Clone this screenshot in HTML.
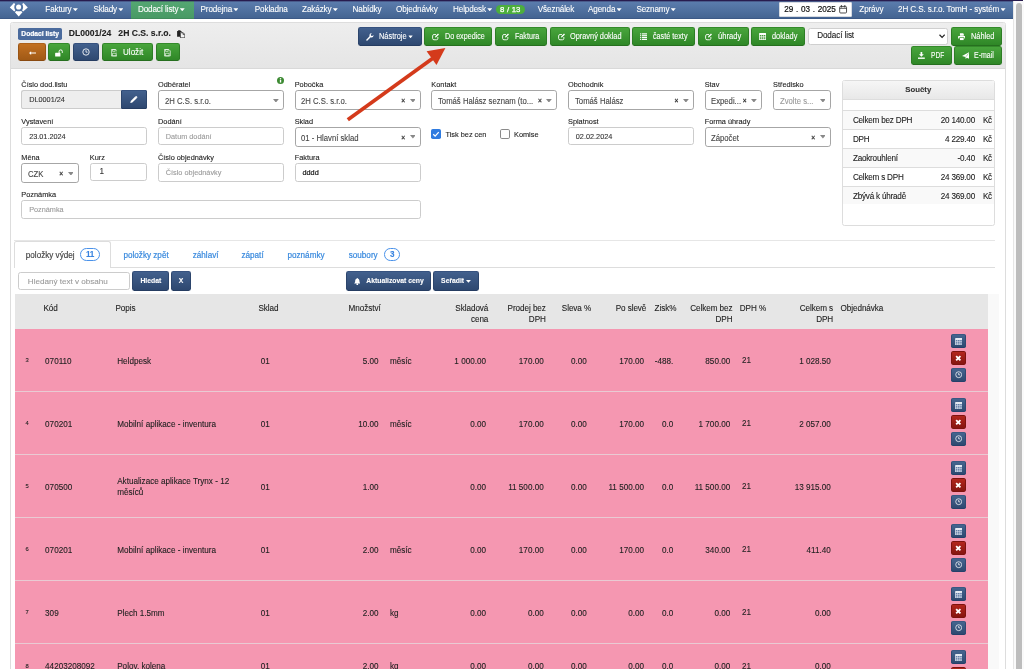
<!DOCTYPE html>
<html lang="cs">
<head>
<meta charset="utf-8">
<title>Dodací list DL0001/24</title>
<style>
*{box-sizing:border-box}
html,body{margin:0;padding:0}
body{width:1024px;height:669px;overflow:hidden;background:#fff;position:relative;font-family:"Liberation Sans",sans-serif;font-size:8px;color:#222;line-height:1.3;will-change:transform;-webkit-text-stroke-width:.1px}
.abs{position:absolute}
svg{display:block}
/* top strip + navbar */
#strip{left:0;top:0;width:1023px;height:1.2px;background:#281c4e}
#nav{left:0;top:1px;width:1013px;height:17.5px;background:linear-gradient(#5c7eae,#446492);border-bottom:1px solid #3c5986;color:#fff;font-size:8.15px;letter-spacing:-.12px}
#nav .it{position:absolute;top:0;height:17px;line-height:17px;white-space:nowrap}
#nav .act{position:absolute;left:130.5px;top:0;width:63px;height:17.5px;background:linear-gradient(#55a773,#489a65);border-bottom:1px solid #418c5c}
.caret{display:inline-block;width:5px;height:2.8px;background:currentColor;clip-path:polygon(0 0,100% 0,50% 100%);vertical-align:middle;margin-left:1.3px;position:relative;top:-.1px}
#nbadge{left:496px;top:3.8px;width:28.5px;height:9.2px;border-radius:4.6px;background:#4cae3c;color:#fff;font-size:7.8px;line-height:9.4px;text-align:center;-webkit-text-stroke-width:.25px;word-spacing:.4px;letter-spacing:0}
#ndate{left:779px;top:1.2px;width:73px;height:14.4px;background:#fff;border:1px solid #d7dbe2;border-radius:1px;color:#111;font-size:8.15px;line-height:14px;padding-left:4.2px;white-space:nowrap;word-spacing:.5px;letter-spacing:0;-webkit-text-stroke-width:.2px}
/* scrollbar */
#sbt{left:1013px;top:1.3px;width:11px;height:668px;background:#fafafa;border-left:1px solid #e6e6e6}
#sbh{left:1016px;top:2.5px;width:6px;height:680px;background:#bdbdbd;border-radius:3px}
/* panel */
#panel{left:10px;top:22.3px;width:995.5px;height:660px;border:1px solid #ddd;border-radius:2.5px;background:#fff}
#phead{left:11px;top:23.3px;width:993.5px;height:45.5px;background:linear-gradient(#eeeeee,#e5e5e5);border-bottom:1px solid #d9d9d9;border-radius:2px 2px 0 0}
.btn{position:absolute;height:18.6px;border-radius:2.4px;color:#fff;font-size:7.3px;line-height:16.6px;white-space:nowrap;border:1px solid}
.g{background:linear-gradient(#48a53c,#2f8727);border-color:#348a2b #2d7d25 #266f1f}
.b{background:linear-gradient(#42608d,#2e4870);border-color:#36527f #2c456c #253c61}
.o{background:linear-gradient(#c27021,#a05916);border-color:#ad611b #9a5414 #8a4a10}
.btn svg{position:absolute}
.btn span{position:absolute;top:1.1px;transform-origin:0 50%}
#pbadge{left:18px;top:27.8px;width:44.2px;height:12.2px;border-radius:1.8px;background:#4b6b9d;color:#fff;font-weight:700;font-size:6.7px;line-height:12.4px;text-align:center;-webkit-text-stroke-width:.22px}
#ptitle{left:68.7px;top:28.3px;font-weight:700;font-size:8.6px;line-height:11px;white-space:nowrap;color:#222;transform:scale(1,1.1);transform-origin:0 100%}
#dsel{left:807.6px;top:27.6px;width:140.4px;height:17.6px;background:#fff;border:1px solid #cfcfcf;border-radius:2.4px;font-size:8.15px;line-height:14.2px;padding-left:8.6px;color:#222;letter-spacing:-.1px}

.lab{position:absolute;font-size:7.35px;line-height:10px;color:#222;white-space:nowrap}
.inp{position:absolute;height:18.7px;border:1px solid #ccc;border-radius:2.6px;background:#fff;font-size:7.3px;line-height:18.4px;padding-left:6.8px;color:#333;white-space:nowrap;overflow:hidden}
.inp.ph{color:#9a9a9a}
.s2{position:absolute;height:20px;border:1px solid #a6a6a6;border-radius:2.8px;background:#fff;font-size:8.15px;line-height:21px;padding-left:5.6px;color:#444;white-space:nowrap;overflow:hidden}
.s2.ph{color:#999}
.s2 span{display:inline-block;transform:scaleX(.95);transform-origin:0 50%}
.s2 svg{left:auto;right:4.3px;top:7.7px}
.s2 u{position:absolute;right:14.6px;top:0;text-decoration:none;font-weight:700;font-size:6.6px;color:#333;line-height:19px}

#sums{left:841.6px;top:80.2px;width:153.3px;height:146px;border:1px solid #ddd;border-radius:2.5px;background:#fff}
#sumh{left:842.6px;top:81.2px;width:151.3px;height:18.6px;background:linear-gradient(#f6f6f6,#e8e8e8);border-bottom:1px solid #ddd;text-align:center;font-weight:700;font-size:7.8px;line-height:17.600px;color:#333}
.sr{position:absolute;left:842.6px;width:151.3px;height:18.85px;border-top:1px solid #ddd;font-size:8.15px;letter-spacing:-.21px;line-height:20.8px;color:#222}
.sr i,.sr em,.sr s{position:absolute;top:0;font-style:normal;text-decoration:none;white-space:nowrap}
.sr i{left:10.300px}.sr em{right:18.900px}.sr s{left:140.300px}

#hr1{left:14.3px;top:240px;width:981px;height:1px;background:#e6e6e6}
#hr2{left:14.3px;top:267.1px;width:981px;height:1px;background:#ddd}
#tab1{left:14.3px;top:241px;width:96.3px;height:27px;border:1px solid #ddd;border-bottom:0;border-radius:2.5px 2.5px 0 0;background:#fff}
.tt{position:absolute;top:249.9px;font-size:8.15px;line-height:11px;white-space:nowrap;color:#3a8ade;-webkit-text-stroke:.2px #3a8ade}
.tbg{position:absolute;height:12.7px;border:1.25px solid #4a92ea;border-radius:6.4px;background:#fff;color:#3a84e0;font-weight:700;font-size:8.15px;line-height:11.2px;text-align:center;letter-spacing:-.3px}
.sb{position:absolute;height:19.6px;border-radius:2.4px;color:#fff;font-size:6.8px;font-weight:700;line-height:18.4px;white-space:nowrap;border-width:1px;border-style:solid;text-align:center}

#tside{left:987.8px;top:294.3px;width:10.9px;height:380px;background:#f9f9f9}
#thead{left:14.5px;top:294.3px;width:973.3px;height:34.7px;background:#e6e6e6}
.th{position:absolute;font-size:8.15px;letter-spacing:-.06px;line-height:10.9px;color:#222;white-space:nowrap;top:303.9px}
.th.r{text-align:right}
.row{position:absolute;left:14.5px;width:973.3px;height:62.85px;background:#f597b1;border-top:1px solid #e9cad3;font-size:8.15px;color:#222}
.row span{position:absolute;line-height:10px;white-space:nowrap}
.row span.r{text-align:right}
.ab{position:absolute;left:936px;width:15.6px;height:13.6px;border-radius:1.800px;border:1px solid}
.ab.b{background:linear-gradient(#45658f,#2e4970);border-color:#3a5882 #2f4a72 #26406a}
.ab.rd{background:linear-gradient(#b3261c,#861510);border-color:#7d130e}
</style>
</head>
<body>
<div id="strip" class="abs"></div>
<div class="abs" style="left:0;top:1px;width:1013px;height:1px;background:rgba(40,28,78,.35);z-index:2"></div>
<div id="nav" class="abs">
  <div class="act"></div>
  <svg class="abs" style="left:0;top:-1px" width="40" height="19" viewBox="0 0 40 19"><g fill="#fff"><circle cx="18.600" cy="7" r="2.550"/><path d="M9.800 7.500L13.900 3.100L15.200 4.100Q13.300 7.200 15.300 10.400L14.300 11.500Z"/><path d="M27.800 7.500L23.500 3.100L22.200 4.100Q24.100 7.200 22.100 10.400L23.100 11.500Z"/><path d="M14.900 12.200L16.200 10.900Q18.650 11.800 21.100 10.900L22.500 12.200L18.700 16.400Z"/></g></svg>
  <div class="it" style="left:45.3px">Faktury<i class="caret"></i></div>
  <div class="it" style="left:93.4px">Sklady<i class="caret"></i></div>
  <div class="it" style="left:137.9px">Dodací listy<i class="caret"></i></div>
  <div class="it" style="left:200.5px">Prodejna<i class="caret"></i></div>
  <div class="it" style="left:254.8px">Pokladna</div>
  <div class="it" style="left:302.1px">Zakázky<i class="caret"></i></div>
  <div class="it" style="left:352.5px">Nabídky</div>
  <div class="it" style="left:396px">Objednávky</div>
  <div class="it" style="left:453px">Helpdesk<i class="caret"></i></div>
  <div id="nbadge" class="abs">8 / 13</div>
  <div class="it" style="left:537.8px">Všeználek</div>
  <div class="it" style="left:588px">Agenda<i class="caret"></i></div>
  <div class="it" style="left:636.4px">Seznamy<i class="caret"></i></div>
  <div id="ndate" class="abs">29 . 03 . 2025</div>
  <svg class="abs" style="left:839.4px;top:4px" width="8.2" height="8.6" viewBox="0 0 16 17"><rect x="1.2" y="2.800" width="13.600" height="13" rx="2" fill="none" stroke="#333" stroke-width="1.700"/><path d="M1.2 6.500h13.600" stroke="#333" stroke-width="1.700"/><path d="M4.600 0.600v3.600M11.400 0.600v3.600" stroke="#333" stroke-width="1.700" stroke-linecap="round"/></svg>
  <div class="it" style="left:859.3px">Zprávy</div>
  <div class="it" style="left:898px">2H C.S. s.r.o. TomH - systém<i class="caret"></i></div>
</div>
<div id="sbt" class="abs"></div>
<div id="sbh" class="abs"></div>
<div id="panel" class="abs"></div>
<div id="phead" class="abs"></div>
<div id="pbadge" class="abs">Dodací listy</div>
<div id="ptitle" class="abs">DL0001/24&nbsp;&nbsp;&nbsp;2H C.S. s.r.o.</div>
<div class="btn o" style="left:18px;top:43.0px;width:27.7px;height:18.4px;font-size:8.15px;line-height:16.4px"><svg class="abs" style="left:9.7px;top:7.2px" width="7.4" height="4.2" viewBox="0 0 28 16"><path d="M0 8l8-7v5h20v4H8v5z" fill="#fff"/></svg></div>
<div class="btn g" style="left:48px;top:43.0px;width:22.3px;height:18.4px;font-size:8.15px;line-height:16.4px"><svg class="abs" style="left:6.4px;top:4.7px" width="8.2" height="8.2" viewBox="0 0 28 28"><path d="M1 13h15a1.500 1.500 0 0 1 1.500 1.500v10a1.500 1.500 0 0 1-1.500 1.500H1a1.500 1.500 0 0 1-1.500-1.500v-10A1.500 1.500 0 0 1 1 13z" fill="#fff" transform="translate(1,0)"/><path d="M14 13V8.500a5.500 5.500 0 0 1 11 0V12" fill="none" stroke="#fff" stroke-width="3.400" stroke-linecap="round"/></svg></div>
<div class="btn b" style="left:73px;top:43.0px;width:25.8px;height:18.4px;font-size:8.15px;line-height:16.4px"><svg class="abs" style="left:8.2px;top:3.9px" width="8" height="8" viewBox="0 0 24 24"><circle cx="12" cy="12" r="9.600" fill="none" stroke="#fff" stroke-width="2.6"/><path d="M12 6.500V12.500H16.500" fill="none" stroke="#fff" stroke-width="2.400"/></svg></div>
<div class="btn g" style="left:102px;top:43.0px;width:51.1px;height:18.4px;font-size:8.15px;line-height:16.4px"><svg class="abs" style="left:7.8px;top:5.2px" width="6.6" height="7.4" viewBox="0 0 22 24"><path d="M1.200 1.200h14.800l4.800 4.800v16.800H1.200z" fill="none" stroke="#fff" stroke-width="2.400" stroke-linejoin="round"/><path d="M5 1.500h9v6H5z" fill="none" stroke="#fff" stroke-width="2"/><path d="M5 14h12v8.500H5z" fill="none" stroke="#fff" stroke-width="2"/></svg><span style="transform:scaleX(0.994);left:20.4px">Uložit</span></div>
<div class="btn g" style="left:155.7px;top:43.0px;width:24.0px;height:18.4px;font-size:8.15px;line-height:16.4px"><svg class="abs" style="left:7.6px;top:5.2px" width="6.6" height="7.4" viewBox="0 0 22 24"><path d="M1.200 1.200h14.800l4.800 4.800v16.800H1.200z" fill="none" stroke="#fff" stroke-width="2.400" stroke-linejoin="round"/><path d="M5 1.500h9v6H5z" fill="none" stroke="#fff" stroke-width="2"/><path d="M5 14h12v8.500H5z" fill="none" stroke="#fff" stroke-width="2"/></svg></div>
<svg class="abs" style="left:176.6px;top:29.6px" width="8.4" height="8.2" viewBox="0 0 24 24"><path d="M0 3h3V0.500h7V3h3v4H8.500v13H0z" fill="#222"/><path d="M9.800 8h8l5 5V23H9.800z" fill="#f4f4f4" stroke="#222" stroke-width="2.200" stroke-linejoin="round"/><path d="M17.300 8.300v5h5" fill="none" stroke="#222" stroke-width="1.800"/></svg>
<div class="btn b" style="left:358.2px;top:27.0px;width:63.7px;height:18.8px;font-size:8.15px;line-height:16.8px"><svg class="abs" style="left:6.8px;top:5.4px" width="7.8" height="7.8" viewBox="0 0 24 24"><path d="M3 21.500L13.500 11" stroke="#fff" stroke-width="4.400" stroke-linecap="round"/><path d="M22.800 6.200a6.200 6.200 0 1 1-5-5l-3.300 3.600 1 3.700 3.700 1z" fill="#fff"/></svg><span style="transform:scaleX(0.913);left:19.7px">Nástroje<i class="caret" style="margin-left:1.8px"></i></span></div>
<div class="btn g" style="left:424.2px;top:27.0px;width:68.0px;height:18.8px;font-size:8.15px;line-height:16.8px"><svg class="abs" style="left:6.4px;top:5.4px" width="7.4" height="7.4" viewBox="0 0 24 24"><path d="M19 13v4.500a4.500 4.500 0 0 1-4.500 4.500H6.500a4.500 4.500 0 0 1-4.500-4.500V9.500a4.500 4.500 0 0 1 4.500-4.500h6.500" fill="none" stroke="#fff" stroke-width="2.900"/><path d="M9.500 15l1-4.200L19.500 1.800l3.200 3.200-9 9z" fill="#fff"/></svg><span style="transform:scaleX(0.881);left:19.7px">Do expedice</span></div>
<div class="btn g" style="left:494.9px;top:27.0px;width:52.6px;height:18.8px;font-size:8.15px;line-height:16.8px"><svg class="abs" style="left:6.4px;top:5.4px" width="7.4" height="7.4" viewBox="0 0 24 24"><path d="M19 13v4.500a4.500 4.500 0 0 1-4.500 4.500H6.500a4.500 4.500 0 0 1-4.500-4.500V9.500a4.500 4.500 0 0 1 4.500-4.500h6.500" fill="none" stroke="#fff" stroke-width="2.900"/><path d="M9.500 15l1-4.200L19.500 1.800l3.200 3.200-9 9z" fill="#fff"/></svg><span style="transform:scaleX(0.88);left:19.3px">Faktura</span></div>
<div class="btn g" style="left:550.2px;top:27.0px;width:79.6px;height:18.8px;font-size:8.15px;line-height:16.8px"><svg class="abs" style="left:6.4px;top:5.4px" width="7.4" height="7.4" viewBox="0 0 24 24"><path d="M19 13v4.500a4.500 4.500 0 0 1-4.500 4.500H6.500a4.500 4.500 0 0 1-4.500-4.500V9.500a4.500 4.500 0 0 1 4.500-4.500h6.500" fill="none" stroke="#fff" stroke-width="2.900"/><path d="M9.500 15l1-4.200L19.500 1.800l3.200 3.200-9 9z" fill="#fff"/></svg><span style="transform:scaleX(0.906);left:19.1px">Opravný doklad</span></div>
<div class="btn g" style="left:632.2px;top:27.0px;width:63.1px;height:18.8px;font-size:8.15px;line-height:16.8px"><svg class="abs" style="left:6.8px;top:5.4px" width="7.2" height="7" viewBox="0 0 24 24"><rect x="0" y="1" width="4" height="4" fill="#fff"/><rect x="6.500" y="1" width="17.500" height="4" fill="#fff"/><rect x="0" y="7.3" width="4" height="4" fill="#fff"/><rect x="6.500" y="7.3" width="17.500" height="4" fill="#fff"/><rect x="0" y="13.6" width="4" height="4" fill="#fff"/><rect x="6.500" y="13.6" width="17.500" height="4" fill="#fff"/><rect x="0" y="19.9" width="4" height="4" fill="#fff"/><rect x="6.500" y="19.9" width="17.500" height="4" fill="#fff"/></svg><span style="transform:scaleX(0.888);left:19.7px">časté texty</span></div>
<div class="btn g" style="left:697.8px;top:27.0px;width:50.8px;height:18.8px;font-size:8.15px;line-height:16.8px"><svg class="abs" style="left:6.4px;top:5.4px" width="7.4" height="7.4" viewBox="0 0 24 24"><path d="M19 13v4.500a4.500 4.500 0 0 1-4.500 4.500H6.500a4.500 4.500 0 0 1-4.500-4.500V9.500a4.500 4.500 0 0 1 4.500-4.500h6.500" fill="none" stroke="#fff" stroke-width="2.900"/><path d="M9.500 15l1-4.200L19.500 1.800l3.200 3.200-9 9z" fill="#fff"/></svg><span style="transform:scaleX(0.933);left:18.9px">úhrady</span></div>
<div class="btn g" style="left:751.3px;top:27.0px;width:53.5px;height:18.8px;font-size:8.15px;line-height:16.8px"><svg class="abs" style="left:6.8px;top:5.4px" width="7.2" height="7" viewBox="0 0 24 24"><path d="M0 2a2 2 0 0 1 2-2h20a2 2 0 0 1 2 2v20a2 2 0 0 1-2 2H2a2 2 0 0 1-2-2z" fill="#fff"/><g fill="#3f9433"><rect x="2.500" y="7" width="5.200" height="3.600"/><rect x="9.400" y="7" width="5.200" height="3.600"/><rect x="16.300" y="7" width="5.200" height="3.600"/><rect x="2.500" y="12.400" width="5.200" height="3.600"/><rect x="9.400" y="12.400" width="5.200" height="3.600"/><rect x="16.300" y="12.400" width="5.200" height="3.600"/><rect x="2.500" y="17.800" width="5.200" height="3.600"/><rect x="9.400" y="17.800" width="5.200" height="3.600"/><rect x="16.300" y="17.800" width="5.200" height="3.600"/></g></svg><span style="transform:scaleX(0.904);left:19.3px">doklady</span></div>
<div id="dsel" class="abs">Dodací list<svg class="abs" style="left:130px;top:5.8px" width="6.2" height="4.400" viewBox="0 0 12 8"><path d="M1 1.200l5 5 5-5" fill="none" stroke="#222" stroke-width="2.300"/></svg></div>
<div class="btn g" style="left:950.5px;top:26.8px;width:51.6px;height:18.9px;font-size:8.15px;line-height:16.9px"><svg class="abs" style="left:6.2px;top:5.45px" width="7.6" height="7.4" viewBox="0 0 24 24"><path d="M6 1h10l2.500 2.500V9H6z" fill="#fff"/><path d="M2 9.500h20a2 2 0 0 1 2 2V18h-4v-4H4v4H0v-6.500a2 2 0 0 1 2-2z" fill="#fff"/><path d="M6 16h12v7H6z" fill="#fff"/></svg><span style="transform:scaleX(0.906);left:19.3px">Náhled</span></div>
<div class="btn g" style="left:911.2px;top:46.2px;width:40.6px;height:18.4px;font-size:8.15px;line-height:16.4px"><svg class="abs" style="left:6.0px;top:5.2px" width="6.8" height="7" viewBox="0 0 24 24"><path d="M9 0h6v8h5.500L12 16.500 3.500 8H9z" fill="#fff"/><path d="M0 19h24v5H0z" fill="#fff"/></svg><span style="transform:scaleX(0.81);left:18.9px">PDF</span></div>
<div class="btn g" style="left:954.3px;top:46.2px;width:47.8px;height:18.4px;font-size:8.15px;line-height:16.4px"><svg class="abs" style="left:6.9px;top:5.2px" width="7" height="7" viewBox="0 0 24 24"><path d="M0 13.500L24 1V23L16.500 19.500L12.500 24L12 17.500Z" fill="#fff"/><path d="M14 16L22 5" stroke="#3b9631" stroke-width="1.600"/></svg><span style="transform:scaleX(0.859);left:19.1px">E-mail</span></div>
<div class="lab" style="left:21.33px;top:79.9px">Číslo dod.listu</div>
<div class="inp" style="left:21.33px;top:90.1px;width:100.07px;background:#eee;border-radius:2.6px 0 0 2.6px;border-right:0;">DL0001/24</div>
<div class="btn b" style="left:120.9px;top:90.1px;width:26.1px;height:18.7px;border-radius:0 1.2px 1.2px 0"><svg class="abs" style="left:8.4px;top:4.6px" width="7.4" height="7.4" viewBox="0 0 24 24"><path d="M1 23l1.500-6.500L17 2l5 5L7.500 21.500z" fill="#fff"/><path d="M18.500 0.800a2 2 0 0 1 2.800 0l2 2a2 2 0 0 1 0 2.800L22 7l-5-5z" fill="#fff"/></svg></div>
<div class="lab" style="left:158px;top:79.9px">Odběratel</div>
<svg class="abs" style="left:277px;top:76.8px" width="7" height="7" viewBox="0 0 24 24"><circle cx="12" cy="12" r="12" fill="#3c8a32"/><rect x="9.800" y="10" width="4.600" height="9" fill="#fff"/><circle cx="12" cy="6" r="2.600" fill="#fff"/></svg>
<div class="s2" style="left:158px;top:89.9px;width:126px"><span>2H C.S. s.r.o.</span><svg class="abs" width="5.8" height="3.600" viewBox="0 0 58 36"><path d="M0 0h58L29 36z" fill="#888"/></svg></div>
<div class="lab" style="left:294.67px;top:79.9px">Pobočka</div>
<div class="s2" style="left:294.67px;top:89.9px;width:126.0px"><span>2H C.S. s.r.o.</span><u>×</u><svg class="abs" width="5.8" height="3.600" viewBox="0 0 58 36"><path d="M0 0h58L29 36z" fill="#888"/></svg></div>
<div class="lab" style="left:431.33px;top:79.9px">Kontakt</div>
<div class="s2" style="left:431.33px;top:89.9px;width:126.0px"><span>Tomáš Halász seznam (to...</span><u>×</u><svg class="abs" width="5.8" height="3.600" viewBox="0 0 58 36"><path d="M0 0h58L29 36z" fill="#888"/></svg></div>
<div class="lab" style="left:568px;top:79.9px">Obchodník</div>
<div class="s2" style="left:568px;top:89.9px;width:126px"><span>Tomáš Halász</span><u>×</u><svg class="abs" width="5.8" height="3.600" viewBox="0 0 58 36"><path d="M0 0h58L29 36z" fill="#888"/></svg></div>
<div class="lab" style="left:704.67px;top:79.9px">Stav</div>
<div class="s2" style="left:704.67px;top:89.9px;width:57.66px"><span>Expedi...</span><u>×</u><svg class="abs" width="5.8" height="3.600" viewBox="0 0 58 36"><path d="M0 0h58L29 36z" fill="#888"/></svg></div>
<div class="lab" style="left:773px;top:79.9px">Středisko</div>
<div class="s2 ph" style="left:773px;top:89.9px;width:57.67px"><span>Zvolte s...</span><svg class="abs" width="5.8" height="3.600" viewBox="0 0 58 36"><path d="M0 0h58L29 36z" fill="#888"/></svg></div>
<div class="lab" style="left:21.33px;top:116.5px">Vystavení</div>
<div class="inp" style="left:21.33px;top:126.7px;width:126.0px;">23.01.2024</div>
<div class="lab" style="left:158px;top:116.5px">Dodání</div>
<div class="inp ph" style="left:158px;top:126.7px;width:126px;">Datum dodání</div>
<div class="lab" style="left:294.67px;top:116.5px">Sklad</div>
<div class="s2" style="left:294.67px;top:126.5px;width:126.0px"><span>01 - Hlavní sklad</span><u>×</u><svg class="abs" width="5.8" height="3.600" viewBox="0 0 58 36"><path d="M0 0h58L29 36z" fill="#888"/></svg></div>
<div class="abs" style="left:431.2px;top:129.2px;width:10px;height:10px;border-radius:1.800px;background:#2f7be0"><svg width="10" height="10" viewBox="0 0 20 20"><path d="M4.500 10.500l3.800 3.800 7.200-8" fill="none" stroke="#fff" stroke-width="2.600"/></svg></div>
<div class="lab" style="left:445.5px;top:130.1px">Tisk bez cen</div>
<div class="abs" style="left:499.5px;top:129.2px;width:10px;height:10px;border-radius:1.800px;background:#fff;border:1px solid #8a8a8a"></div>
<div class="lab" style="left:514px;top:130.1px">Komise</div>
<div class="lab" style="left:568px;top:116.5px">Splatnost</div>
<div class="inp" style="left:568px;top:126.7px;width:126px;">02.02.2024</div>
<div class="lab" style="left:704.67px;top:116.5px">Forma úhrady</div>
<div class="s2" style="left:704.67px;top:126.5px;width:126.0px"><span>Zápočet</span><u>×</u><svg class="abs" width="5.8" height="3.600" viewBox="0 0 58 36"><path d="M0 0h58L29 36z" fill="#888"/></svg></div>
<div class="lab" style="left:21.33px;top:153.0px">Měna</div>
<div class="s2" style="left:21.4px;top:163.0px;width:57.4px"><span>CZK</span><u>×</u><svg class="abs" width="5.8" height="3.600" viewBox="0 0 58 36"><path d="M0 0h58L29 36z" fill="#888"/></svg></div>
<div class="lab" style="left:89.8px;top:153.0px">Kurz</div>
<div class="inp" style="left:90px;top:163.2px;width:56.8px;padding-left:8.6px;line-height:15.4px;font-size:8.15px;height:17.8px;">1</div>
<div class="lab" style="left:158px;top:153.0px">Číslo objednávky</div>
<div class="inp ph" style="left:158px;top:163.2px;width:126px;">Číslo objednávky</div>
<div class="lab" style="left:294.67px;top:153.0px">Faktura</div>
<div class="inp" style="left:294.67px;top:163.2px;width:126.0px;color:#111;-webkit-text-stroke-width:.18px;">dddd</div>
<div class="lab" style="left:21.33px;top:190.0px">Poznámka</div>
<div class="inp ph" style="left:21.33px;top:200.2px;width:399.34px;">Poznámka</div>
<div id="sums" class="abs"></div><div id="sumh" class="abs">Součty</div>
<div class="sr" style="top:110.2px;background:#f9f9f9;"><i>Celkem bez DPH</i><em>20 140.00</em><s>Kč</s></div>
<div class="sr" style="top:129.05px;"><i>DPH</i><em>4 229.40</em><s>Kč</s></div>
<div class="sr" style="top:147.9px;background:#f9f9f9;"><i>Zaokrouhlení</i><em>-0.40</em><s>Kč</s></div>
<div class="sr" style="top:166.75px;"><i>Celkem s DPH</i><em>24 369.00</em><s>Kč</s></div>
<div class="sr" style="top:185.6px;background:#f9f9f9;"><i>Zbývá k úhradě</i><em>24 369.00</em><s>Kč</s></div>
<div id="hr1" class="abs"></div><div id="hr2" class="abs"></div><div id="tab1" class="abs"></div>
<div class="tt" style="left:25.8px;color:#444;-webkit-text-stroke:.15px #444">položky výdej</div><div class="tbg" style="left:80.1px;top:248.2px;width:19.8px">11</div>
<div class="tt" style="left:123.5px">položky zpět</div>
<div class="tt" style="left:192.75px">záhlaví</div>
<div class="tt" style="left:241.5px">zápatí</div>
<div class="tt" style="left:287.5px">poznámky</div>
<div class="tt" style="left:348.75px">soubory</div>
<div class="tbg" style="left:384.3px;top:248.2px;width:15.8px">3</div>
<div class="inp ph" style="left:17.6px;top:271.900px;width:112px;height:17.800px;line-height:17.2px;font-size:8.1px;padding-left:9.2px">Hledaný text v obsahu</div>
<div class="sb b" style="left:132.2px;top:271.2px;width:37.3px">Hledat</div>
<div class="sb b" style="left:171.3px;top:271.2px;width:19.7px">X</div>
<div class="sb b" style="left:345.5px;top:271.2px;width:85.5px;text-align:left"><svg class="abs" style="left:7.2px;top:6.2px" width="6.6" height="7.2" viewBox="0 0 22 24"><path d="M11 1.500c4.500 0 7 3.500 7 8 0 5 1.500 7 3.500 9H0.500c2-2 3.500-4 3.500-9 0-4.500 2.500-8 7-8z" fill="#fff"/><circle cx="11" cy="20.500" r="3" fill="#fff"/><circle cx="11" cy="1.800" r="1.800" fill="#fff"/></svg><span style="position:absolute;left:19.800px">Aktualizovat ceny</span></div>
<div class="sb b" style="left:433.3px;top:271.2px;width:45.7px;text-align:left"><span style="position:absolute;left:6.8px">Seřadit<i class="caret" style="margin-left:1.8px"></i></span></div>
<div id="tside" class="abs"></div><div id="thead" class="abs"></div>
<div class="th" style="left:43.5px">Kód</div>
<div class="th" style="left:115.5px">Popis</div>
<div class="th" style="left:258.5px">Sklad</div>
<div class="th" style="left:348.6px">Množství</div>
<div class="th r" style="right:535.7px">Skladová<br>cena</div>
<div class="th r" style="right:478.2px">Prodej bez<br>DPH</div>
<div class="th" style="left:561.8px">Sleva %</div>
<div class="th r" style="right:377.7px">Po slevě</div>
<div class="th" style="left:654.5px">Zisk%</div>
<div class="th r" style="right:291.5px">Celkem bez<br>DPH</div>
<div class="th" style="left:739.8px">DPH %</div>
<div class="th r" style="right:190.9px">Celkem s<br>DPH</div>
<div class="th" style="left:840.5px">Objednávka</div>
<div class="row" style="top:329px;height:62px;border-top:0;"><span style="top:25.9px;left:11.1px;font-size:5.8px;">3</span><span style="top:27.5px;left:30.6px;">070110</span><span style="top:27.5px;left:102.7px;">Heldpesk</span><span style="top:27.5px;left:246.3px;">01</span><span class="r" style="top:27.5px;right:609.3px">5.00</span><span style="top:27.5px;left:375.5px;">měsíc</span><span class="r" style="top:27.5px;right:501.8px">1 000.00</span><span class="r" style="top:27.5px;right:444.1px">170.00</span><span class="r" style="top:27.5px;right:401.1px">0.00</span><span class="r" style="top:27.5px;right:343.8px">170.00</span><span class="r" style="top:27.5px;right:314.6px">-488.</span><span class="r" style="top:27.5px;right:257.6px">850.00</span><span style="top:26.8px;left:727.4px;">21</span><span class="r" style="top:27.5px;right:157.0px">1 028.50</span><div class="ab b" style="top:5.3px"><svg class="abs" style="left:3.4px;top:2.5px" width="7.6" height="7.2" viewBox="0 0 24 23.500"><rect x="0" y="0" width="24" height="23.500" rx="1.500" fill="#e3e8f0"/><rect x="2.2" y="6.6" width="5.400" height="4" fill="#5f7ba6"/><rect x="2.2" y="12" width="5.400" height="4" fill="#5f7ba6"/><rect x="2.2" y="17.4" width="5.400" height="4" fill="#5f7ba6"/><rect x="9.3" y="6.6" width="5.400" height="4" fill="#5f7ba6"/><rect x="9.3" y="12" width="5.400" height="4" fill="#5f7ba6"/><rect x="9.3" y="17.4" width="5.400" height="4" fill="#5f7ba6"/><rect x="16.4" y="6.6" width="5.400" height="4" fill="#5f7ba6"/><rect x="16.4" y="12" width="5.400" height="4" fill="#5f7ba6"/><rect x="16.4" y="17.4" width="5.400" height="4" fill="#5f7ba6"/></svg></div><div class="ab rd" style="top:22.4px"><svg class="abs" style="left:3.7px;top:2.6px" width="6.6" height="6.6" viewBox="0 0 20 20"><path d="M3.500 3.500l13 13M16.500 3.500l-13 13" stroke="#fff" stroke-width="5.6" stroke-linecap="butt"/></svg></div><div class="ab b" style="top:39.2px"><svg class="abs" style="left:3.3px;top:2.1px" width="7.4" height="7.4" viewBox="0 0 24 24"><circle cx="12" cy="12" r="9.600" fill="none" stroke="#fff" stroke-width="2.4"/><path d="M12 6.500V12.500H16.500" fill="none" stroke="#fff" stroke-width="2.400"/></svg></div></div>
<div class="row" style="top:391px;height:63px;"><span style="top:25.9px;left:11.1px;font-size:5.8px;">4</span><span style="top:27.5px;left:30.6px;">070201</span><span style="top:27.5px;left:102.7px;">Mobilní aplikace - inventura</span><span style="top:27.5px;left:246.3px;">01</span><span class="r" style="top:27.5px;right:609.3px">10.00</span><span style="top:27.5px;left:375.5px;">měsíc</span><span class="r" style="top:27.5px;right:501.8px">0.00</span><span class="r" style="top:27.5px;right:444.1px">170.00</span><span class="r" style="top:27.5px;right:401.1px">0.00</span><span class="r" style="top:27.5px;right:343.8px">170.00</span><span class="r" style="top:27.5px;right:314.6px">0.0</span><span class="r" style="top:27.5px;right:257.6px">1 700.00</span><span style="top:26.8px;left:727.4px;">21</span><span class="r" style="top:27.5px;right:157.0px">2 057.00</span><div class="ab b" style="top:6.3px"><svg class="abs" style="left:3.4px;top:2.5px" width="7.6" height="7.2" viewBox="0 0 24 23.500"><rect x="0" y="0" width="24" height="23.500" rx="1.500" fill="#e3e8f0"/><rect x="2.2" y="6.6" width="5.400" height="4" fill="#5f7ba6"/><rect x="2.2" y="12" width="5.400" height="4" fill="#5f7ba6"/><rect x="2.2" y="17.4" width="5.400" height="4" fill="#5f7ba6"/><rect x="9.3" y="6.6" width="5.400" height="4" fill="#5f7ba6"/><rect x="9.3" y="12" width="5.400" height="4" fill="#5f7ba6"/><rect x="9.3" y="17.4" width="5.400" height="4" fill="#5f7ba6"/><rect x="16.4" y="6.6" width="5.400" height="4" fill="#5f7ba6"/><rect x="16.4" y="12" width="5.400" height="4" fill="#5f7ba6"/><rect x="16.4" y="17.4" width="5.400" height="4" fill="#5f7ba6"/></svg></div><div class="ab rd" style="top:23.4px"><svg class="abs" style="left:3.7px;top:2.6px" width="6.6" height="6.6" viewBox="0 0 20 20"><path d="M3.500 3.500l13 13M16.500 3.500l-13 13" stroke="#fff" stroke-width="5.6" stroke-linecap="butt"/></svg></div><div class="ab b" style="top:40.2px"><svg class="abs" style="left:3.3px;top:2.1px" width="7.4" height="7.4" viewBox="0 0 24 24"><circle cx="12" cy="12" r="9.600" fill="none" stroke="#fff" stroke-width="2.4"/><path d="M12 6.500V12.500H16.500" fill="none" stroke="#fff" stroke-width="2.400"/></svg></div></div>
<div class="row" style="top:454px;height:63px;"><span style="top:25.9px;left:11.1px;font-size:5.8px;">5</span><span style="top:27.5px;left:30.6px;">070500</span><span style="top:21.9px;line-height:10.8px;left:102.7px;">Aktualizace aplikace Trynx - 12<br>měsíců</span><span style="top:27.5px;left:246.3px;">01</span><span class="r" style="top:27.5px;right:609.3px">1.00</span><span style="top:27.5px;left:375.5px;"></span><span class="r" style="top:27.5px;right:501.8px">0.00</span><span class="r" style="top:27.5px;right:444.1px">11 500.00</span><span class="r" style="top:27.5px;right:401.1px">0.00</span><span class="r" style="top:27.5px;right:343.8px">11 500.00</span><span class="r" style="top:27.5px;right:314.6px">0.0</span><span class="r" style="top:27.5px;right:257.6px">11 500.00</span><span style="top:26.8px;left:727.4px;">21</span><span class="r" style="top:27.5px;right:157.0px">13 915.00</span><div class="ab b" style="top:6.3px"><svg class="abs" style="left:3.4px;top:2.5px" width="7.6" height="7.2" viewBox="0 0 24 23.500"><rect x="0" y="0" width="24" height="23.500" rx="1.500" fill="#e3e8f0"/><rect x="2.2" y="6.6" width="5.400" height="4" fill="#5f7ba6"/><rect x="2.2" y="12" width="5.400" height="4" fill="#5f7ba6"/><rect x="2.2" y="17.4" width="5.400" height="4" fill="#5f7ba6"/><rect x="9.3" y="6.6" width="5.400" height="4" fill="#5f7ba6"/><rect x="9.3" y="12" width="5.400" height="4" fill="#5f7ba6"/><rect x="9.3" y="17.4" width="5.400" height="4" fill="#5f7ba6"/><rect x="16.4" y="6.6" width="5.400" height="4" fill="#5f7ba6"/><rect x="16.4" y="12" width="5.400" height="4" fill="#5f7ba6"/><rect x="16.4" y="17.4" width="5.400" height="4" fill="#5f7ba6"/></svg></div><div class="ab rd" style="top:23.4px"><svg class="abs" style="left:3.7px;top:2.6px" width="6.6" height="6.6" viewBox="0 0 20 20"><path d="M3.500 3.500l13 13M16.500 3.500l-13 13" stroke="#fff" stroke-width="5.6" stroke-linecap="butt"/></svg></div><div class="ab b" style="top:40.2px"><svg class="abs" style="left:3.3px;top:2.1px" width="7.4" height="7.4" viewBox="0 0 24 24"><circle cx="12" cy="12" r="9.600" fill="none" stroke="#fff" stroke-width="2.4"/><path d="M12 6.500V12.500H16.500" fill="none" stroke="#fff" stroke-width="2.400"/></svg></div></div>
<div class="row" style="top:517px;height:63px;"><span style="top:25.9px;left:11.1px;font-size:5.8px;">6</span><span style="top:27.5px;left:30.6px;">070201</span><span style="top:27.5px;left:102.7px;">Mobilní aplikace - inventura</span><span style="top:27.5px;left:246.3px;">01</span><span class="r" style="top:27.5px;right:609.3px">2.00</span><span style="top:27.5px;left:375.5px;">měsíc</span><span class="r" style="top:27.5px;right:501.8px">0.00</span><span class="r" style="top:27.5px;right:444.1px">170.00</span><span class="r" style="top:27.5px;right:401.1px">0.00</span><span class="r" style="top:27.5px;right:343.8px">170.00</span><span class="r" style="top:27.5px;right:314.6px">0.0</span><span class="r" style="top:27.5px;right:257.6px">340.00</span><span style="top:26.8px;left:727.4px;">21</span><span class="r" style="top:27.5px;right:157.0px">411.40</span><div class="ab b" style="top:6.3px"><svg class="abs" style="left:3.4px;top:2.5px" width="7.6" height="7.2" viewBox="0 0 24 23.500"><rect x="0" y="0" width="24" height="23.500" rx="1.500" fill="#e3e8f0"/><rect x="2.2" y="6.6" width="5.400" height="4" fill="#5f7ba6"/><rect x="2.2" y="12" width="5.400" height="4" fill="#5f7ba6"/><rect x="2.2" y="17.4" width="5.400" height="4" fill="#5f7ba6"/><rect x="9.3" y="6.6" width="5.400" height="4" fill="#5f7ba6"/><rect x="9.3" y="12" width="5.400" height="4" fill="#5f7ba6"/><rect x="9.3" y="17.4" width="5.400" height="4" fill="#5f7ba6"/><rect x="16.4" y="6.6" width="5.400" height="4" fill="#5f7ba6"/><rect x="16.4" y="12" width="5.400" height="4" fill="#5f7ba6"/><rect x="16.4" y="17.4" width="5.400" height="4" fill="#5f7ba6"/></svg></div><div class="ab rd" style="top:23.4px"><svg class="abs" style="left:3.7px;top:2.6px" width="6.6" height="6.6" viewBox="0 0 20 20"><path d="M3.500 3.500l13 13M16.500 3.500l-13 13" stroke="#fff" stroke-width="5.6" stroke-linecap="butt"/></svg></div><div class="ab b" style="top:40.2px"><svg class="abs" style="left:3.3px;top:2.1px" width="7.4" height="7.4" viewBox="0 0 24 24"><circle cx="12" cy="12" r="9.600" fill="none" stroke="#fff" stroke-width="2.4"/><path d="M12 6.500V12.500H16.500" fill="none" stroke="#fff" stroke-width="2.400"/></svg></div></div>
<div class="row" style="top:580px;height:63px;"><span style="top:25.9px;left:11.1px;font-size:5.8px;">7</span><span style="top:27.5px;left:30.6px;">309</span><span style="top:27.5px;left:102.7px;">Plech 1.5mm</span><span style="top:27.5px;left:246.3px;">01</span><span class="r" style="top:27.5px;right:609.3px">2.00</span><span style="top:27.5px;left:375.5px;">kg</span><span class="r" style="top:27.5px;right:501.8px">0.00</span><span class="r" style="top:27.5px;right:444.1px">0.00</span><span class="r" style="top:27.5px;right:401.1px">0.00</span><span class="r" style="top:27.5px;right:343.8px">0.00</span><span class="r" style="top:27.5px;right:314.6px">0.0</span><span class="r" style="top:27.5px;right:257.6px">0.00</span><span style="top:26.8px;left:727.4px;">21</span><span class="r" style="top:27.5px;right:157.0px">0.00</span><div class="ab b" style="top:6.3px"><svg class="abs" style="left:3.4px;top:2.5px" width="7.6" height="7.2" viewBox="0 0 24 23.500"><rect x="0" y="0" width="24" height="23.500" rx="1.500" fill="#e3e8f0"/><rect x="2.2" y="6.6" width="5.400" height="4" fill="#5f7ba6"/><rect x="2.2" y="12" width="5.400" height="4" fill="#5f7ba6"/><rect x="2.2" y="17.4" width="5.400" height="4" fill="#5f7ba6"/><rect x="9.3" y="6.6" width="5.400" height="4" fill="#5f7ba6"/><rect x="9.3" y="12" width="5.400" height="4" fill="#5f7ba6"/><rect x="9.3" y="17.4" width="5.400" height="4" fill="#5f7ba6"/><rect x="16.4" y="6.6" width="5.400" height="4" fill="#5f7ba6"/><rect x="16.4" y="12" width="5.400" height="4" fill="#5f7ba6"/><rect x="16.4" y="17.4" width="5.400" height="4" fill="#5f7ba6"/></svg></div><div class="ab rd" style="top:23.4px"><svg class="abs" style="left:3.7px;top:2.6px" width="6.6" height="6.6" viewBox="0 0 20 20"><path d="M3.500 3.500l13 13M16.500 3.500l-13 13" stroke="#fff" stroke-width="5.6" stroke-linecap="butt"/></svg></div><div class="ab b" style="top:40.2px"><svg class="abs" style="left:3.3px;top:2.1px" width="7.4" height="7.4" viewBox="0 0 24 24"><circle cx="12" cy="12" r="9.600" fill="none" stroke="#fff" stroke-width="2.4"/><path d="M12 6.500V12.500H16.500" fill="none" stroke="#fff" stroke-width="2.400"/></svg></div></div>
<div class="row" style="top:643px;height:63px;"><span style="top:16.799999999999997px;left:11.1px;font-size:5.8px;">8</span><span style="top:18.4px;left:30.6px;">44203208092</span><span style="top:18.4px;left:102.7px;">Polov. kolena</span><span style="top:18.4px;left:246.3px;">01</span><span class="r" style="top:18.4px;right:609.3px">2.00</span><span style="top:18.4px;left:375.5px;">kg</span><span class="r" style="top:18.4px;right:501.8px">0.00</span><span class="r" style="top:18.4px;right:444.1px">0.00</span><span class="r" style="top:18.4px;right:401.1px">0.00</span><span class="r" style="top:18.4px;right:343.8px">0.00</span><span class="r" style="top:18.4px;right:314.6px">0.0</span><span class="r" style="top:18.4px;right:257.6px">0.00</span><span style="top:17.7px;left:727.4px;">21</span><span class="r" style="top:18.4px;right:157.0px">0.00</span><div class="ab b" style="top:6.3px"><svg class="abs" style="left:3.4px;top:2.5px" width="7.6" height="7.2" viewBox="0 0 24 23.500"><rect x="0" y="0" width="24" height="23.500" rx="1.500" fill="#e3e8f0"/><rect x="2.2" y="6.6" width="5.400" height="4" fill="#5f7ba6"/><rect x="2.2" y="12" width="5.400" height="4" fill="#5f7ba6"/><rect x="2.2" y="17.4" width="5.400" height="4" fill="#5f7ba6"/><rect x="9.3" y="6.6" width="5.400" height="4" fill="#5f7ba6"/><rect x="9.3" y="12" width="5.400" height="4" fill="#5f7ba6"/><rect x="9.3" y="17.4" width="5.400" height="4" fill="#5f7ba6"/><rect x="16.4" y="6.6" width="5.400" height="4" fill="#5f7ba6"/><rect x="16.4" y="12" width="5.400" height="4" fill="#5f7ba6"/><rect x="16.4" y="17.4" width="5.400" height="4" fill="#5f7ba6"/></svg></div><div class="ab rd" style="top:23.4px"><svg class="abs" style="left:3.7px;top:2.6px" width="6.6" height="6.6" viewBox="0 0 20 20"><path d="M3.500 3.500l13 13M16.500 3.500l-13 13" stroke="#fff" stroke-width="5.6" stroke-linecap="butt"/></svg></div><div class="ab b" style="top:40.2px"><svg class="abs" style="left:3.3px;top:2.1px" width="7.4" height="7.4" viewBox="0 0 24 24"><circle cx="12" cy="12" r="9.600" fill="none" stroke="#fff" stroke-width="2.4"/><path d="M12 6.500V12.500H16.500" fill="none" stroke="#fff" stroke-width="2.400"/></svg></div></div>
<svg class="abs" style="left:0;top:0;pointer-events:none" width="1024" height="669" viewBox="0 0 1024 669"><path d="M347.8 119.8L432.500 58.600" stroke="#d43a1b" stroke-width="3.700" fill="none"/><path d="M445.4 47.9L426.600 51.200L436.500 64.900z" fill="#d43a1b"/></svg>
</body>
</html>
